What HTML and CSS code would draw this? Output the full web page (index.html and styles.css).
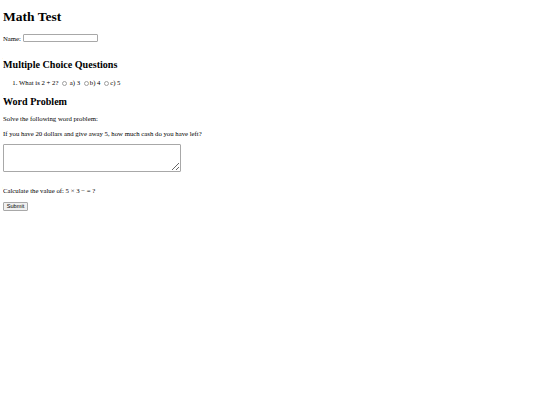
FILE: index.html
```html
<!DOCTYPE html>
<html>
<head>
<meta charset="utf-8">
<title>Math Test</title>
<link rel="stylesheet" href="styles.css">
</head>
<body class="page">
<h1 class="title">Math Test</h1>
<form class="test">
  <div class="name-row"><label class="label" for="name">Name:</label> <input class="text-input" type="text" id="name"></div>
  <h2 class="section first">Multiple Choice Questions</h2>
  <ol class="questions">
    <li class="question">What is 2 + 2? <input class="radio" type="radio" name="q1"> a) 3 <input class="radio" type="radio" name="q1">b) 4 <input class="radio" type="radio" name="q1">c) 5</li>
  </ol>
  <h2 class="section">Word Problem</h2>
  <p class="para">Solve the following word problem:</p>
  <p class="para lead">If you have 20 dollars and give away 5, how much cash do you have left?</p>
  <textarea class="answer"></textarea>
  <p class="para calc">Calculate the value of: 5 × 3 − = ?</p>
  <button class="submit" type="submit">Submit</button>
</form>
</body>
</html>
```
FILE: styles.css
```css
.page {
  margin: 3px;
  font-family: "Liberation Serif", "Times New Roman", serif;
  font-size: 6.75px;
  line-height: 8px;
  color: #000;
  background: #fff;
}
.title {
  font-size: 13.5px;
  line-height: 15px;
  margin: 5.5px 0 0;
  font-weight: bold;
}
.name-row {
  line-height: 9px;
  height: 9px;
  margin-top: 10px;
  display: flex;
  align-items: center;
  gap: 2px;
}
.text-input {
  width: 73px;
  height: 6px;
  padding: 0;
  margin: 0;
  border: 1px solid #a8a8a8;
  border-radius: 1px;
  box-sizing: content-box;
}
.section {
  font-size: 10.1px;
  line-height: 11px;
  margin: 8.5px 0;
  font-weight: bold;
}
.section.first {
  margin-top: 16px;
  margin-bottom: 9.5px;
}
.questions {
  margin: 0;
  padding-left: 16px;
}
.radio {
  appearance: none;
  -webkit-appearance: none;
  box-sizing: border-box;
  width: 5px;
  height: 5px;
  margin: 0 1px 0 2px;
  border: 1px solid #a0a0a0;
  border-radius: 50%;
  background: #fff;
  vertical-align: -0.5px;
}
.para {
  margin: 7px 0;
}
.para.lead {
  margin-bottom: 6px;
}
.answer {
  display: block;
  width: 176px;
  height: 26px;
  padding: 0;
  margin: 0;
  border: 1px solid #a8a8a8;
  border-radius: 1px;
  resize: both;
}
.calc {
  margin-top: 15px;
}
.submit {
  display: block;
  font-family: "Liberation Sans", Arial, sans-serif;
  font-size: 5.6px;
  padding: 0 2px;
  width: 25px;
  height: 8.5px;
  line-height: 6px;
  border: 1px solid #a8a8a8;
  border-radius: 1px;
  background: #efefef;
  color: #000;
}
```
